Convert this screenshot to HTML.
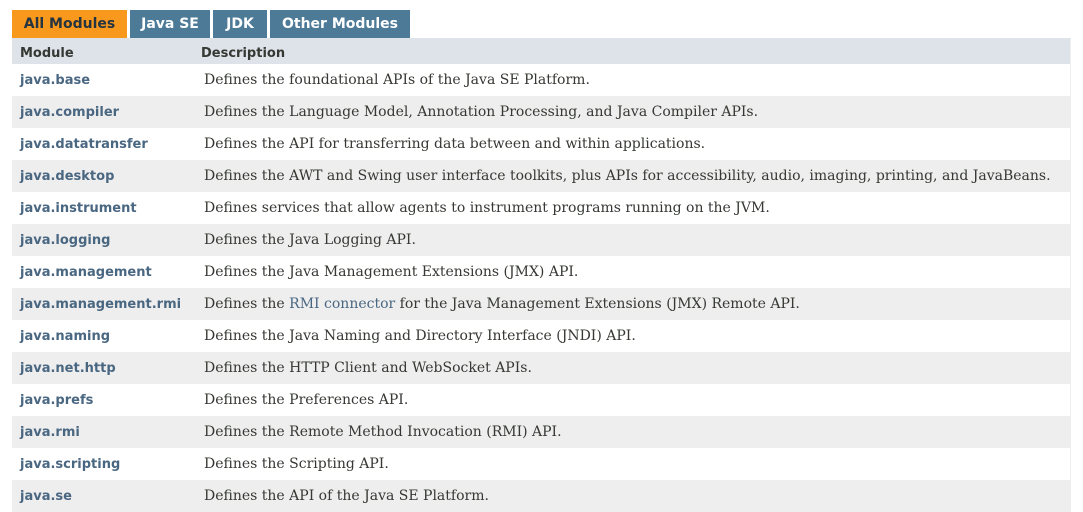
<!DOCTYPE html>
<html><head><meta charset="utf-8"><style>
body{margin:0;background:#fff;width:1083px;height:498px;overflow:hidden;position:relative}
.tab{position:absolute;top:10px;height:28px;font:bold 14px/28px "DejaVu Sans",sans-serif;color:#fff;background:#4d7a97;text-align:center}
.tab.a{background:#f8981d;color:#253441}
.tbl{position:absolute;left:12px;top:38px;width:1058px;border-right:1px solid #eee}
.row{height:32px;position:relative}
.h{height:26px;background:#dee3e9;font:bold 13px/16px "DejaVu Sans",sans-serif;color:#353833}
.h span{position:absolute;top:8px}
.m{position:absolute;left:8px;top:9px;font:bold 13px/16px "DejaVu Sans",sans-serif;color:#4a6782}
.d{position:absolute;left:192px;top:8px;font:14px/16px "DejaVu Serif",serif;color:#353833;white-space:nowrap}
.d a{color:#4a6782}
</style></head><body>
<div class="tab a" style="left:12px;width:115px">All Modules</div>
<div class="tab" style="left:130px;width:80px">Java SE</div>
<div class="tab" style="left:213px;width:54px">JDK</div>
<div class="tab" style="left:270px;width:140px">Other Modules</div>
<div class="tbl">
<div class="h" style="position:relative"><span style="left:8px">Module</span><span style="left:189px">Description</span></div>
<div>
<div class="row" style="background:#fff"><span class="m">java.base</span><span class="d">Defines the foundational APIs of the Java SE Platform.</span></div>
<div class="row" style="background:#eee"><span class="m">java.compiler</span><span class="d">Defines the Language Model, Annotation Processing, and Java Compiler APIs.</span></div>
<div class="row" style="background:#fff"><span class="m">java.datatransfer</span><span class="d">Defines the API for transferring data between and within applications.</span></div>
<div class="row" style="background:#eee"><span class="m">java.desktop</span><span class="d">Defines the AWT and Swing user interface toolkits, plus APIs for accessibility, audio, imaging, printing, and JavaBeans.</span></div>
<div class="row" style="background:#fff"><span class="m">java.instrument</span><span class="d">Defines services that allow agents to instrument programs running on the JVM.</span></div>
<div class="row" style="background:#eee"><span class="m">java.logging</span><span class="d">Defines the Java Logging API.</span></div>
<div class="row" style="background:#fff"><span class="m">java.management</span><span class="d">Defines the Java Management Extensions (JMX) API.</span></div>
<div class="row" style="background:#eee"><span class="m">java.management.rmi</span><span class="d">Defines the <a>RMI connector</a> for the Java Management Extensions (JMX) Remote API.</span></div>
<div class="row" style="background:#fff"><span class="m">java.naming</span><span class="d">Defines the Java Naming and Directory Interface (JNDI) API.</span></div>
<div class="row" style="background:#eee"><span class="m">java.net.http</span><span class="d">Defines the HTTP Client and WebSocket APIs.</span></div>
<div class="row" style="background:#fff"><span class="m">java.prefs</span><span class="d">Defines the Preferences API.</span></div>
<div class="row" style="background:#eee"><span class="m">java.rmi</span><span class="d">Defines the Remote Method Invocation (RMI) API.</span></div>
<div class="row" style="background:#fff"><span class="m">java.scripting</span><span class="d">Defines the Scripting API.</span></div>
<div class="row" style="background:#eee"><span class="m">java.se</span><span class="d">Defines the API of the Java SE Platform.</span></div>
</div></div>
</body></html>
